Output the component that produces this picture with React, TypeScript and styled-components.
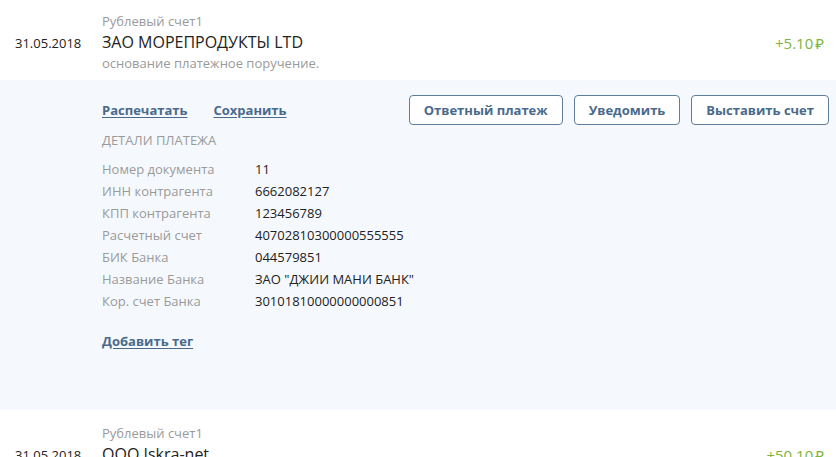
import React from "react";
import styled, { createGlobalStyle } from "styled-components";

const Global = createGlobalStyle`
  html, body { margin: 0; padding: 0; background: #ffffff; }
  body { font-family: "Open Sans", "Noto Sans", sans-serif; color: #222; -webkit-font-smoothing: antialiased; }
`;

const List = styled.div`
  display: flex;
  flex-direction: column;
  width: 836px;
`;

const Header = styled.div<{ $top: number }>`
  display: grid;
  grid-template-columns: 102px 1fr auto;
  grid-template-rows: 18px 24px 18px;
  align-items: center;
  padding: ${(p) => p.$top}px 12px 8px 0;
`;

const Account = styled.div`
  grid-column: 2;
  grid-row: 1;
  font-size: 13px;
  line-height: 18px;
  color: #9a9a9a;
`;

const DateCell = styled.div`
  grid-column: 1;
  grid-row: 2;
  padding-left: 15px;
  font-size: 13px;
  line-height: 24px;
  color: #222;
  padding-top: 2px;
`;

const Title = styled.div`
  grid-column: 2;
  grid-row: 2;
  font-size: 16px;
  line-height: 24px;
  color: #222;
`;

const Amount = styled.div`
  grid-column: 3;
  grid-row: 2;
  font-size: 15px;
  line-height: 24px;
  color: #7cb53a;
  padding-top: 2px;
`;

const Currency = styled.span`
  margin-left: 2px;
`;

const Description = styled.div`
  grid-column: 2;
  grid-row: 3;
  font-size: 13px;
  line-height: 18px;
  color: #9a9a9a;
`;

const Details = styled.div`
  background: #f5f9fd;
  padding: 15px 7px 60px 102px;
  display: flex;
  flex-direction: column;
`;

const Actions = styled.div`
  display: flex;
  align-items: center;
  justify-content: space-between;
`;

const Links = styled.div`
  display: flex;
  gap: 26px;
`;

const Link = styled.a`
  font-size: 13px;
  font-weight: 700;
  color: #4a6a8c;
  text-decoration: underline;
  text-underline-offset: 2px;
  cursor: pointer;
  line-height: 18px;
`;

const Buttons = styled.div`
  display: flex;
  gap: 11px;
`;

const Button = styled.button`
  height: 30px;
  padding: 0 14px;
  border: 1px solid #5f7e9c;
  border-radius: 4px;
  background: #ffffff;
  color: #4a6a8c;
  font-family: "Open Sans", "Noto Sans", sans-serif;
  font-size: 13px;
  font-weight: 700;
  cursor: pointer;
`;

const SectionTitle = styled.div`
  margin-top: 6px;
  font-size: 13px;
  line-height: 18px;
  color: #9a9a9a;
  text-transform: uppercase;
`;

const Table = styled.div`
  margin-top: 9px;
  display: grid;
  grid-template-columns: 153px auto;
  grid-auto-rows: 22px;
  align-items: center;
  font-size: 13px;
`;

const Label = styled.div`
  color: #9a9a9a;
`;

const Value = styled.div`
  color: #222;
`;

const AddTag = styled(Link)`
  margin-top: 20px;
  align-self: flex-start;
`;

const rows: [string, string][] = [
  ["Номер документа", "11"],
  ["ИНН контрагента", "6662082127"],
  ["КПП контрагента", "123456789"],
  ["Расчетный счет", "40702810300000555555"],
  ["БИК Банка", "044579851"],
  ["Название Банка", 'ЗАО "ДЖИИ МАНИ БАНК"'],
  ["Кор. счет Банка", "30101810000000000851"],
];

export default function App() {
  return (
    <List>
      <Global />
      <Header $top={12}>
        <Account>Рублевый счет1</Account>
        <DateCell>31.05.2018</DateCell>
        <Title>ЗАО МОРЕПРОДУКТЫ LTD</Title>
        <Amount>
          +5.10<Currency>₽</Currency>
        </Amount>
        <Description>основание платежное поручение.</Description>
      </Header>
      <Details>
        <Actions>
          <Links>
            <Link>Распечатать</Link>
            <Link>Сохранить</Link>
          </Links>
          <Buttons>
            <Button>Ответный платеж</Button>
            <Button>Уведомить</Button>
            <Button>Выставить счет</Button>
          </Buttons>
        </Actions>
        <SectionTitle>Детали платежа</SectionTitle>
        <Table>
          {rows.map(([l, v]) => (
            <React.Fragment key={l}>
              <Label>{l}</Label>
              <Value>{v}</Value>
            </React.Fragment>
          ))}
        </Table>
        <AddTag>Добавить тег</AddTag>
      </Details>
      <Header $top={14}>
        <Account>Рублевый счет1</Account>
        <DateCell>31.05.2018</DateCell>
        <Title>ООО Iskra-net</Title>
        <Amount>
          +50.10<Currency>₽</Currency>
        </Amount>
        <Description>основание платежное поручение.</Description>
      </Header>
    </List>
  );
}
